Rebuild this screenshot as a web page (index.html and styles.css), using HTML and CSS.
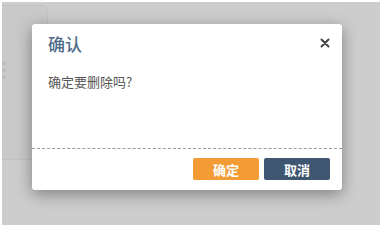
FILE: index.html
```html
<!DOCTYPE html>
<html lang="zh-CN">
  <head>
    <meta charset="UTF-8" />
    <meta name="viewport" content="width=device-width, initial-scale=1.0" />
    <title>确认</title>
    <link rel="stylesheet" href="styles.css">
  </head>
  <body>
    <div class="screen">
      <div class="panel">
        <span class="mark"></span>
        <span class="mark"></span>
        <span class="mark"></span>
      </div>
      <div class="dialog">
        <div class="dialog-header">
          <h2>确认</h2>
          <span class="close">
            <svg width="10" height="10" viewBox="0 0 10 10">
              <path d="M1.5 1.5 L8.5 8.5 M8.5 1.5 L1.5 8.5" stroke="#444" stroke-width="2" stroke-linecap="round" />
            </svg>
          </span>
        </div>
        <div class="dialog-body">确定要删除吗?</div>
        <div class="dialog-footer">
          <button class="btn btn-ok">确定</button>
          <button class="btn btn-cancel">取消</button>
        </div>
      </div>
    </div>
  </body>
</html>
```

FILE: styles.css
```css
body {
  margin: 0;
  padding: 2px;
  background-color: #fff;
  font-family: "Noto Sans CJK SC", "Noto Sans", sans-serif;
}
.screen {
  position: relative;
  height: 223px;
  background-color: #cdcdcd;
  overflow: hidden;
}
.panel {
  margin-top: 3px;
  width: 46px;
  height: 155px;
  background-color: #c9c9c9;
  border: 1px solid #c2c2c2;
  border-left: none;
  border-radius: 0 6px 6px 0;
  display: flex;
  flex-direction: column;
  padding-top: 56px;
  box-sizing: border-box;
  gap: 4px;
}
.mark {
  width: 4px;
  height: 3px;
  background-color: #bdbdbd;
}
.dialog {
  position: absolute;
  left: 30px;
  top: 22px;
  width: 310px;
  height: 166px;
  background-color: #fff;
  border-radius: 3px;
  box-shadow: 0 4px 16px rgba(0, 0, 0, 0.38);
  display: flex;
  flex-direction: column;
}
.dialog-header {
  display: flex;
  justify-content: space-between;
  align-items: center;
  padding: 7px 12px 0 16px;
}
.dialog-header h2 {
  margin: 0;
  font-size: 17px;
  font-weight: 500;
  line-height: 26px;
  color: #4e6a88;
}
.close {
  display: flex;
  margin-top: -3px;
}
.dialog-body {
  flex: 1;
  padding: 16px 16px 0;
  font-size: 13px;
  line-height: 18px;
  color: #555;
}
.dialog-footer {
  border-top: 1px dashed #9a9a9a;
  display: flex;
  justify-content: flex-end;
  gap: 5px;
  padding: 9px 12px 10px;
}
.btn {
  width: 66px;
  height: 22px;
  border: none;
  border-radius: 2px;
  color: #fff;
  font-family: inherit;
  font-size: 13px;
  font-weight: 700;
  padding: 0;
  cursor: pointer;
}
.btn-ok {
  background-color: #f39c36;
}
.btn-cancel {
  background-color: #3e566f;
}
```
